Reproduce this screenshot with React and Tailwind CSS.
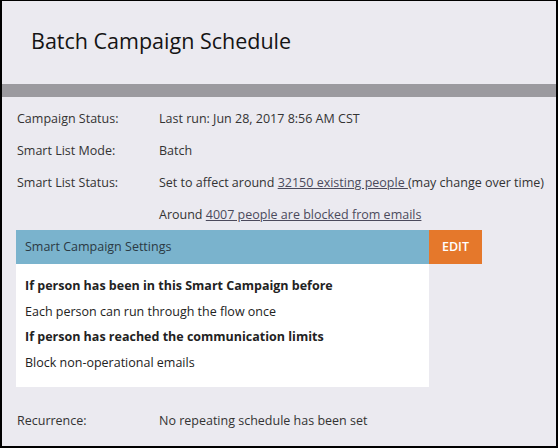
import React from 'react';

const rows = [
    { label: 'Campaign Status:', value: <span>Last run: Jun 28, 2017 8:56 AM CST</span> },
    { label: 'Smart List Mode:', value: <span>Batch</span> },
    {
        label: 'Smart List Status:',
        value: (
            <span>
                Set to affect around <a className="underline text-[#4b4a5c]">32150 existing people </a>(may change over time)
            </span>
        ),
    },
    {
        label: '',
        value: (
            <span>
                Around <a className="underline text-[#4b4a5c]">4007 people are blocked from emails</a>
            </span>
        ),
    },
];

const App = () => {
    return (
        <div className="w-[558px] h-[448px] bg-black pl-[2px] pt-[1px] pr-[2px] pb-[2px]">
            <div
                className="w-full h-full bg-[#ebeaf0] text-[#333] text-[12.5px] overflow-hidden"
                style={{ fontFamily: '"Open Sans", "Liberation Sans", sans-serif' }}
            >
                {/* Title */}
                <div className="h-[83px] flex items-center pl-[29px] pb-[2px]">
                    <h1 className="text-[21.5px] text-[#141414] font-normal">Batch Campaign Schedule</h1>
                </div>
                <div className="h-[13px] bg-[#9b9a9f]" />

                {/* Status rows */}
                <div className="pt-[6px]">
                    {rows.map((row, i) => (
                        <div key={i} className="h-[32px] flex items-center pl-[15px]">
                            <div className="w-[142px] shrink-0">{row.label}</div>
                            <div className="whitespace-nowrap">{row.value}</div>
                        </div>
                    ))}
                </div>

                {/* Settings */}
                <div className="ml-[14px] w-[466px] -mt-[1px]">
                    <div className="flex h-[34px]">
                        <div className="w-[413px] bg-[#7ab3cd] flex items-center pl-[9px] text-[#2b3a44]">
                            Smart Campaign Settings
                        </div>
                        <div className="w-[53px] bg-[#e5782b] flex items-center justify-center text-white font-semibold">
                            EDIT
                        </div>
                    </div>
                    <div className="w-[413px] bg-white pt-[10px] pb-[11px] pl-[9px] text-[#222]">
                        <div className="h-[25.5px] flex items-center font-bold">If person has been in this Smart Campaign before</div>
                        <div className="h-[25.5px] flex items-center">Each person can run through the flow once</div>
                        <div className="h-[25.5px] flex items-center font-bold">If person has reached the communication limits</div>
                        <div className="h-[25.5px] flex items-center">Block non-operational emails</div>
                    </div>
                </div>

                {/* Recurrence */}
                <div className="mt-[18px] h-[32px] flex items-center pl-[15px]">
                    <div className="w-[142px] shrink-0">Recurrence:</div>
                    <div>No repeating schedule has been set</div>
                </div>
            </div>
        </div>
    );
};

export default App;
